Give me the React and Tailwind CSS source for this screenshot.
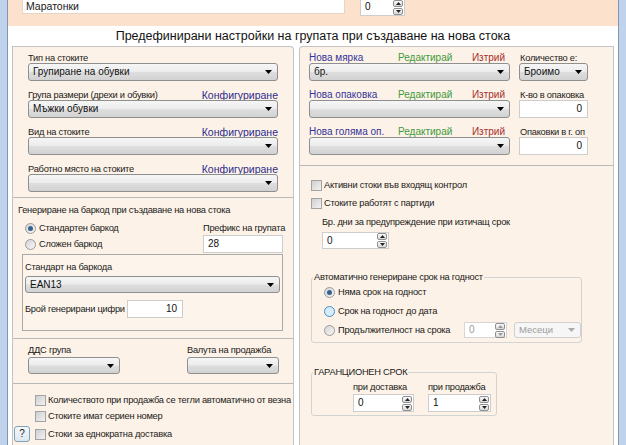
import React from "react";

const L = "text-[9.3px] tracking-[-0.25px] leading-[12px] whitespace-nowrap text-[#1a1a1a]";

const Tri = ({ color = "#000" }) => (
  <svg width="7" height="4" viewBox="0 0 7 4" className="block">
    <path d="M0 0H7L3.5 4Z" fill={color} />
  </svg>
);

function Select({ text = "", className = "", disabled = false, h = "h-[18px]" }) {
  return (
    <div
      className={`flex items-center ${h} rounded-[3px] border ${
        disabled
          ? "border-[#cfcfcf] bg-[#f6f6f6] text-[#9b9b9b]"
          : "border-[#8e8f8f] bg-[linear-gradient(#f6f6f6_0%,#ececec_48%,#dedede_52%,#d2d2d2_100%)] text-[#111]"
      } ${className}`}
    >
      <span className={`flex-1 pl-[4px] ${disabled ? "text-[9.5px]" : "text-[10px]"} leading-none whitespace-nowrap overflow-hidden`}>{text}</span>
      <span className="pr-[5px]">
        <Tri color={disabled ? "#aaa" : "#000"} />
      </span>
    </div>
  );
}

function Input({ text = "", className = "", right = false, h = "h-[18px]" }) {
  return (
    <div
      className={`flex items-center ${h} border border-[#cdcdcd] bg-white px-[4px] text-[10px] leading-none text-[#111] ${
        right ? "justify-end" : ""
      } ${className}`}
    >
      {text}
    </div>
  );
}

function SpinBtns({ disabled }) {
  const c = disabled ? "#9a9a9a" : "#222";
  return (
    <div className="flex flex-col gap-[1px]">
      <div className="flex h-[7px] w-[10px] items-center justify-center rounded-[2px] border border-[#8f8f8f] bg-[linear-gradient(#fbfbfb,#d9d9d9)]">
        <svg width="5" height="3" viewBox="0 0 5 3" className="block">
          <path d="M0 3H5L2.5 0Z" fill={c} />
        </svg>
      </div>
      <div className="flex h-[7px] w-[10px] items-center justify-center rounded-[2px] border border-[#8f8f8f] bg-[linear-gradient(#fbfbfb,#d9d9d9)]">
        <svg width="5" height="3" viewBox="0 0 5 3" className="block">
          <path d="M0 0H5L2.5 3Z" fill={c} />
        </svg>
      </div>
    </div>
  );
}

function Spin({ value, className = "", disabled = false, h = "h-[17px]" }) {
  return (
    <div
      className={`flex items-center ${h} border ${
        disabled ? "border-[#d6d6d6] text-[#9b9b9b]" : "border-[#cdcdcd] text-[#111]"
      } bg-white pl-[4px] pr-[1px] ${className}`}
    >
      <span className="flex-1 text-[10px] leading-none">{value}</span>
      <SpinBtns disabled={disabled} />
    </div>
  );
}

function Check({ label, className = "" }) {
  return (
    <div className={`flex items-center gap-[2px] ${className}`}>
      <div className="h-[11px] w-[11px] shrink-0 border border-[#a3a3a3] bg-[linear-gradient(135deg,#cfcfcf,#f2f2f2)]" />
      <span className={L}>{label}</span>
    </div>
  );
}

function Radio({ label, checked = false, hover = false, className = "" }) {
  return (
    <div className={`flex items-center gap-[3px] ${className}`}>
      <div
        className={`flex h-[11px] w-[11px] shrink-0 items-center justify-center rounded-full border ${
          hover ? "border-[#4a8fc4] bg-[#d6ecfa]" : "border-[#9a9a9a] bg-[linear-gradient(135deg,#d5d5d5,#f6f6f6)]"
        }`}
      >
        {checked && <div className="h-[5px] w-[5px] rounded-full bg-[#35628f]" />}
      </div>
      <span className={L}>{label}</span>
    </div>
  );
}

function Label({ children, link }) {
  return (
    <div className="flex h-[13px] items-end justify-between">
      <span className={`${L} leading-none`}>{children}</span>
      {link && <span className="whitespace-nowrap text-[10.5px] leading-none text-[#2c2c8c]">{link}</span>}
    </div>
  );
}

function UnitRow({ name, label, right }) {
  return (
    <div className="flex gap-[9px]">
      <div className="flex w-[201px] flex-col">
        <div className="flex h-[13px] items-end whitespace-nowrap">
          <span className="w-[89px] text-[10px] leading-none text-[#34349a]">{name}</span>
          <span className="text-[10px] leading-none text-[#3d9a3d]">Редактирай</span>
          <span className="ml-auto pr-[5px] text-[10px] leading-none text-[#a53030]">Изтрий</span>
        </div>
        <Select text={name === "Нова мярка" ? "бр." : ""} />
      </div>
      <div className="flex w-[69px] flex-col">
        <div className="flex h-[13px] items-end pl-[1px]">
          <span className={`${L} leading-none`}>{label}</span>
        </div>
        {right}
      </div>
    </div>
  );
}

export default function App() {
  return (
    <div className="flex h-[445px] w-[626px] overflow-hidden bg-white font-['Liberation_Sans','DejaVu_Sans',sans-serif] text-[#1a1a1a]">
      <div className="h-full w-[8px] border-r border-[#8296b0] bg-[#bfd3ec]" />
      <div className="flex flex-1 flex-col">
        {/* top band */}
        <div className="flex h-[26px] items-start bg-[#fce2cd]">
          <div className="-mt-[1px] ml-[14px] flex h-[15px] w-[323px] items-center border border-[#e6d5c5] bg-white pl-[3px] text-[10.5px] leading-none">
            Маратонки
          </div>
          <Spin value="0" className="-mt-[2px] ml-[15px] w-[45px]" h="h-[18px]" />
        </div>
        {/* title */}
        <div className="flex h-[20px] items-center justify-center bg-white text-[12.5px] leading-none text-[#111]">
          Предефинирани настройки на групата при създаване на нова стока
        </div>
        {/* panels */}
        <div className="flex flex-1 pl-[4px]">
          {/* left */}
          <div className="flex w-[282px] flex-col rounded-tr-[4px] border-l border-r border-t border-[#c3c3c3] bg-[#fdf2e7]">
            <div className="flex h-[151px] flex-col gap-[6px] border-b border-[#b9b9b9] px-[15px] pt-[3px]">
              <div className="flex flex-col">
                <Label>Тип на стоките</Label>
                <Select text="Групиране на обувки" />
              </div>
              <div className="flex flex-col">
                <Label link="Конфигуриране">Група размери (дрехи и обувки)</Label>
                <Select text="Мъжки обувки" />
              </div>
              <div className="flex flex-col">
                <Label link="Конфигуриране">Вид на стоките</Label>
                <Select />
              </div>
              <div className="flex flex-col">
                <Label link="Конфигуриране">Работно място на стоките</Label>
                <Select />
              </div>
            </div>
            {/* barcode */}
            <div className="flex h-[141px] flex-col border-b border-[#b9b9b9] pt-[6px]">
              <div className={`h-[12px] pl-[5px] ${L}`}>
                Генериране на баркод при създаване на нова стока
              </div>
              <div className="mt-[4px] flex pl-[12px]">
                <div className="flex w-[178px] flex-col">
                  <Radio label="Стандартен баркод" checked className="h-[16px]" />
                  <Radio label="Сложен баркод" className="h-[16px]" />
                </div>
                <div className="flex w-[80px] flex-col pt-[2px]">
                  <div className={`h-[12px] ${L}`}>Префикс на групата</div>
                  <Input text="28" className="mt-[1px]" />
                </div>
              </div>
              <div className="ml-[9px] mt-[1px] flex h-[77px] w-[261px] flex-col border border-[#a9a9a9] bg-[#fdf5ec] pl-[2px] pt-[6px]">
                <div className={`h-[12px] ${L}`}>Стандарт на баркода</div>
                <Select text="EAN13" className="mt-[3px] w-[255px]" h="h-[17px]" />
                <div className="mt-[7px] flex items-center">
                  <span className={`w-[102px] ${L}`}>Брой генерирани цифри</span>
                  <Input text="10" right className="w-[56px] pr-[5px]" />
                </div>
              </div>
            </div>
            {/* dds */}
            <div className="flex h-[45px] border-b border-[#b9b9b9] pl-[15px] pt-[5px]">
              <div className="flex w-[159px] flex-col">
                <div className={`h-[12px] ${L}`}>ДДС група</div>
                <Select className="mt-[1px] w-[92px]" h="h-[17px]" />
              </div>
              <div className="flex w-[92px] flex-col">
                <div className={`h-[12px] ${L}`}>Валута на продажба</div>
                <Select className="mt-[1px] w-[92px]" h="h-[17px]" />
              </div>
            </div>
            {/* checks */}
            <div className="flex flex-1 flex-col pt-[8px]">
              <Check label="Количеството при продажба се тегли автоматично от везна" className="h-[16px] pl-[22px]" />
              <Check label="Стоките имат сериен номер" className="h-[16px] pl-[22px]" />
              <div className="mt-[2px] flex h-[16px] items-center pl-[1px]">
                <div className="flex h-[16px] w-[16px] items-center justify-center rounded-[3px] border border-[#7fa2b8] bg-[linear-gradient(#f4f8fb,#dce8f0)] text-[10px] leading-none text-[#222]">
                  ?
                </div>
                <Check label="Стоки за еднократна доставка" className="ml-[5px]" />
              </div>
            </div>
          </div>
          <div className="w-[5px]" />
          {/* right */}
          <div className="flex w-[315px] flex-col rounded-tl-[4px] border-l border-r border-t border-[#c3c3c3] bg-[#fdf2e7]">
            <div className="flex h-[119px] flex-col gap-[6px] border-b border-[#b9b9b9] pl-[9px] pt-[3px]">
              <UnitRow name="Нова мярка" label="Количество е:" right={<Select text="Броимо" />} />
              <UnitRow
                name="Нова опаковка"
                label="К-во в опаковка"
                right={<Input text="0" right className="pr-[5px]" />}
              />
              <UnitRow
                name="Нова голяма оп."
                label="Опаковки в г. оп"
                right={<Input text="0" right className="pr-[5px]" />}
              />
            </div>
            <div className="flex flex-1 flex-col pl-[11px] pt-[12px]">
              <Check label="Активни стоки във входящ контрол" className="h-[14px]" />
              <Check label="Стоките работят с партиди" className="mt-[4px] h-[14px]" />
              <div className={`ml-[11px] mt-[6px] h-[12px] ${L}`}>
                Бр. дни за предупреждение при изтичащ срок
              </div>
              <Spin value="0" className="ml-[11px] mt-[4px] w-[67px]" h="h-[17px]" />
              <fieldset className="mt-[22px] w-[271px] rounded-[3px] border border-[#d3d3d3] p-0">
                <legend className={`ml-[1px] px-[1px] ${L}`}>
                  Автоматично генериране срок на годност
                </legend>
                <div className="pb-[4px] pl-[12px]">
                  <Radio label="Няма срок на годност" checked className="mt-[1px] h-[16px]" />
                  <Radio label="Срок на годност до дата" hover className="mt-[3px] h-[16px]" />
                  <div className="mt-[3px] flex h-[16px] items-center">
                    <Radio label="Продължителност на срока" className="w-[140px]" />
                    <Spin value="0" disabled className="w-[43px]" h="h-[16px]" />
                    <Select disabled text="Месеци" className="ml-[7px] w-[67px]" h="h-[16px]" />
                  </div>
                </div>
              </fieldset>
              <fieldset className="mt-[23px] w-[186px] rounded-[3px] border border-[#d3d3d3] p-0">
                <legend className={`ml-[1px] px-[1px] ${L}`}>ГАРАНЦИОНЕН СРОК</legend>
                <div className="mt-[3px] flex gap-[14px] pb-[3px] pl-[41px]">
                  <div className="flex w-[61px] flex-col">
                    <div className={`h-[12px] ${L}`}>при доставка</div>
                    <Spin value="0" className="mt-[1px]" h="h-[18px]" />
                  </div>
                  <div className="flex w-[63px] flex-col">
                    <div className={`h-[12px] ${L}`}>при продажба</div>
                    <Spin value="1" className="mt-[1px]" h="h-[18px]" />
                  </div>
                </div>
              </fieldset>
            </div>
          </div>
          <div className="w-[4px]" />
        </div>
      </div>
      <div className="h-full w-[8px] border-l border-[#8296b0] bg-[#bfd3ec]" />
    </div>
  );
}
